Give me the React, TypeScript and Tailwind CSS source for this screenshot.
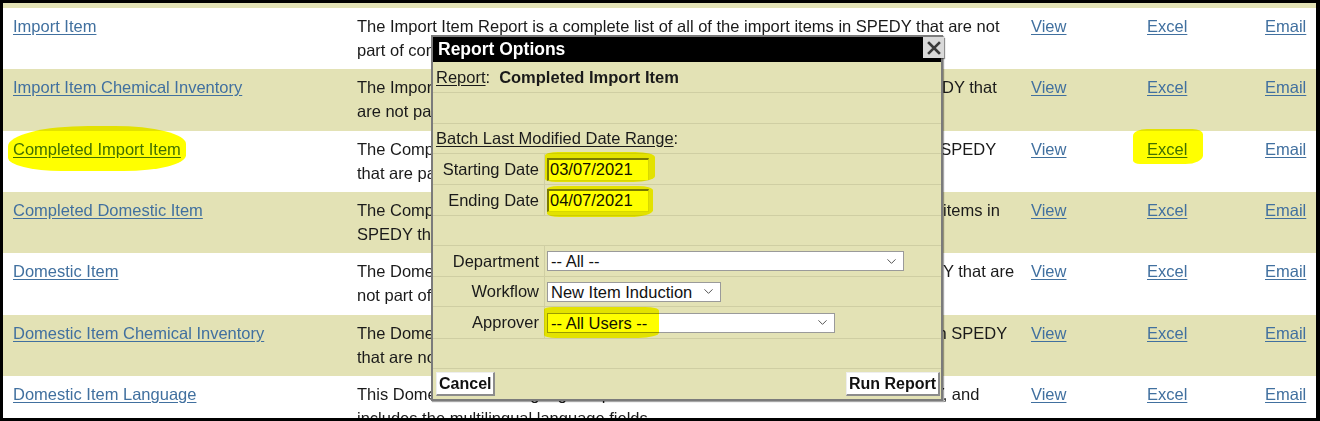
import { ChevronDown } from 'lucide-react';

const rows = [
  {
    name: 'Import Item',
    lines: [
      'The Import Item Report is a complete list of all of the import items in SPEDY that are not',
      'part of completed batches.',
    ],
  },
  {
    name: 'Import Item Chemical Inventory',
    lines: [
      'The Import Item Chemical Inventory Report lists each of the import items in SPEDY that',
      'are not part of completed batches.',
    ],
  },
  {
    name: 'Completed Import Item',
    lines: [
      'The Completed Import Item Report is a complete list of all of the import items in SPEDY',
      'that are part of completed batches.',
    ],
    marked: true,
  },
  {
    name: 'Completed Domestic Item',
    lines: [
      'The Completed Domestic Item Report is a complete listing of all of the domestic items in',
      'SPEDY that are part of completed batches.',
    ],
  },
  {
    name: 'Domestic Item',
    lines: [
      'The Domestic Item Report is a complete list of all of the domestic items in SPEDY that are',
      'not part of completed batches.',
    ],
  },
  {
    name: 'Domestic Item Chemical Inventory',
    lines: [
      'The Domestic Item Chemical Inventory Report lists each of the domestic items in SPEDY',
      'that are not part of completed batches.',
    ],
  },
  {
    name: 'Domestic Item Language',
    lines: [
      'This Domestic Item Language Report is a list of all the domestic items in SPEDY, and',
      'includes the multilingual language fields.',
    ],
  },
];

const link = 'text-[#41709f] underline underline-offset-2';

function Highlight({ className }: { className: string }) {
  return <span className={`pointer-events-none absolute bg-[#ffff00] mix-blend-multiply ${className}`} />;
}

function ReportRow({ row, index }: { row: (typeof rows)[number]; index: number }) {
  const bg = index % 2 === 0 ? 'bg-white' : 'bg-[#e3e2b5]';
  return (
    <div className={`flex h-[61.33px] shrink-0 pl-[10px] pt-[6px] leading-6 ${bg}`}>
      <div className="relative w-[344px]">
        <a className={link}>{row.name}</a>
        {row.marked && <Highlight className="left-[-5px] top-[-11px] h-[45px] w-[178px] rounded-[45%_40%_35%_30%]" />}
      </div>
      <div className="w-[674px] whitespace-nowrap text-[#1a1a1a]">
        {row.lines.map((l) => (
          <div key={l}>{l}</div>
        ))}
      </div>
      <div className="w-[116px]">
        <a className={link}>View</a>
      </div>
      <div className="relative w-[118px]">
        <a className={link}>Excel</a>
        {row.marked && <Highlight className="left-[-14px] top-[-8px] h-[35px] w-[70px] rounded-[20%_15%_25%_10%]" />}
      </div>
      <div>
        <a className={link}>Email</a>
      </div>
    </div>
  );
}

function Select({ value, width }: { value: string; width: string }) {
  return (
    <div
      className={`flex h-[20px] items-center justify-between border border-[#9a9a9a] bg-white pl-[3px] pr-[4px] leading-[18px] text-[#111] ${width}`}
    >
      <span>{value}</span>
      <ChevronDown size={15} strokeWidth={1.6} className="text-[#555]" />
    </div>
  );
}

function DateInput({ value }: { value: string }) {
  return (
    <div className="h-[23px] w-[102px] border-l-2 border-t-2 border-r border-b border-l-[#7a7a7a] border-t-[#7a7a7a] border-r-[#d8d8d8] border-b-[#d8d8d8] bg-white pl-[1px] leading-[19px] text-[#111]">
      {value}
    </div>
  );
}

function FieldRow({ label, h, children }: { label: string; h: string; children: React.ReactNode }) {
  return (
    <div className={`flex border-b border-[#cfcea3] ${h}`}>
      <div className="flex w-[112px] items-center justify-end border-r border-[#cfcea3] pr-[5px]">{label}</div>
      <div className="relative flex items-center pl-[2px]">{children}</div>
    </div>
  );
}

function Button({ children }: { children: React.ReactNode }) {
  return (
    <div className="flex h-[24px] items-center border border-b-2 border-r-2 border-l-[#eeeeee] border-t-[#eeeeee] border-b-[#8c8c8c] border-r-[#8c8c8c] bg-white px-[2px] font-bold leading-5 text-[#111]">
      {children}
    </div>
  );
}

function ReportOptions() {
  return (
    <div className="absolute left-[428px] top-[32px] flex h-[366px] w-[512px] flex-col border-2 border-[#7b7b7b] bg-[#e3e2b5] text-[16.5px] text-[#1a1a1a] shadow-[1px_1px_1px_rgba(0,0,0,0.35)]">
      <div className="flex h-[25px] shrink-0 items-center bg-black pl-[5px] text-[17.5px] font-bold text-white">
        Report Options
      </div>
      <div className="absolute right-[-3px] top-[0px] flex h-[21px] w-[21px] items-center justify-center bg-[#d9d9d9] shadow-[1px_1px_1px_rgba(0,0,0,0.4)]">
        <svg width="14" height="14" viewBox="0 0 14 14">
          <path d="M2 2 L12 12 M12 2 L2 12" stroke="#3a3a3a" strokeWidth="2.6" strokeLinecap="square" />
        </svg>
      </div>
      <div className="flex h-[31px] items-center border-b border-[#cfcea3] pl-[3px]">
        <span className="underline underline-offset-2">Report</span>
        <span>:</span>
        <span className="ml-[9px] font-bold">Completed Import Item</span>
      </div>
      <div className="h-[31px] border-b border-[#cfcea3]" />
      <div className="flex h-[30px] items-center border-b border-[#cfcea3] pl-[3px]">
        <span className="underline underline-offset-2">Batch Last Modified Date Range</span>
        <span>:</span>
      </div>
      <FieldRow label="Starting Date" h="h-[31px]">
        <DateInput value="03/07/2021" />
        <Highlight className="left-[0px] top-[-2px] h-[30px] w-[110px] rounded-[12%_18%_20%_10%]" />
      </FieldRow>
      <FieldRow label="Ending Date" h="h-[31px]">
        <DateInput value="04/07/2021" />
        <Highlight className="left-[2px] top-[1px] h-[31px] w-[106px] rounded-[10%_14%_22%_12%]" />
      </FieldRow>
      <div className="h-[30px] border-b border-[#cfcea3]" />
      <FieldRow label="Department" h="h-[31px]">
        <Select value="-- All --" width="w-[357px]" />
      </FieldRow>
      <FieldRow label="Workflow" h="h-[30px]">
        <Select value="New Item Induction" width="w-[174px]" />
      </FieldRow>
      <FieldRow label="Approver" h="h-[32px]">
        <Select value="-- All Users --" width="w-[288px]" />
        <Highlight className="left-[-1px] top-[0px] h-[31px] w-[115px] rounded-[8%_12%_18%_10%]" />
      </FieldRow>
      <div className="h-[30px] border-b border-[#cfcea3]" />
      <div className="flex flex-1 items-center justify-between pl-[3px] pr-[1px] text-[16px]">
        <Button>Cancel</Button>
        <Button>Run Report</Button>
      </div>
    </div>
  );
}

export default function App() {
  return (
    <div className="relative h-[421px] w-[1320px] overflow-hidden border-[3px] border-r-4 border-black bg-white font-['Liberation_Sans',Arial,sans-serif] text-[16.5px]">
      <div className="flex h-full flex-col">
        <div className="h-[5px] shrink-0 bg-[#e3e2b5]" />
        {rows.map((row, i) => (
          <ReportRow key={row.name} row={row} index={i} />
        ))}
      </div>
      <ReportOptions />
    </div>
  );
}
